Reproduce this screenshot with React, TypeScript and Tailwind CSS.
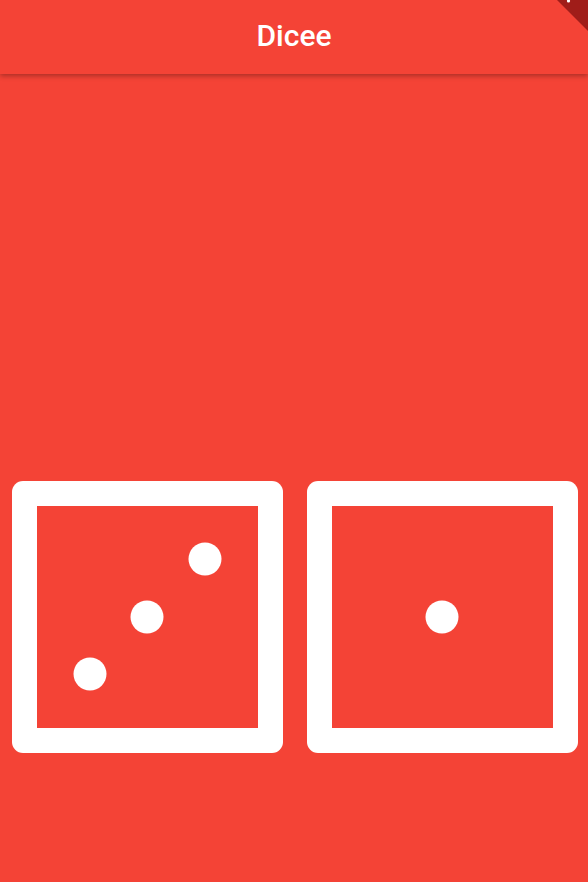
import React from "react";

type Pip = [number, number];

const faces: Record<number, Pip[]> = {
  1: [[135, 136]],
  3: [
    [193, 78],
    [135, 136],
    [78, 193],
  ],
};

const Die = ({ value }: { value: number }) => {
  return (
    <svg width="271" height="272" viewBox="0 0 271 272" className="block shrink-0">
      <rect x="0" y="0" width="271" height="272" rx="11" fill="#ffffff" />
      <rect x="25" y="25" width="221" height="222" fill="#f44336" />
      {faces[value].map(([cx, cy], i) => (
        <circle key={i} cx={cx} cy={cy} r="16.5" fill="#ffffff" />
      ))}
    </svg>
  );
};

const App = () => {
  return (
    <div className="relative h-[882px] w-[588px] overflow-hidden bg-[#f44336] font-['Roboto',sans-serif]">
      <header className="relative z-10 flex h-[74px] items-center justify-center bg-[#f44336] pb-[4px] shadow-[0_2px_5px_rgba(0,0,0,0.3)]">
        <h1 className="text-[30px] font-medium text-white">Dicee</h1>
      </header>

      <main className="flex gap-[24px] pl-[12px] pt-[407px]">
        <Die value={3} />
        <Die value={1} />
      </main>

      {/* debug banner corner */}
      <svg width="40" height="40" viewBox="0 0 40 40" className="absolute right-0 top-0 z-20">
        <defs>
          <linearGradient id="rib" x1="0" y1="1" x2="1" y2="0">
            <stop offset="0" stopColor="#c42a22" />
            <stop offset="0.45" stopColor="#a01d19" />
          </linearGradient>
        </defs>
        <polygon points="9,0 40,0 40,31" fill="url(#rib)" />
        <circle cx="20.5" cy="1" r="1.6" fill="#ffffff" />
      </svg>
    </div>
  );
};

export default App;
